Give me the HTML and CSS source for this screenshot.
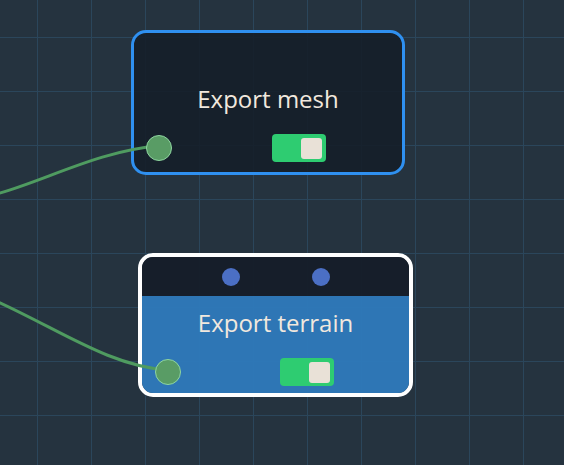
FILE: index.html
```html
<!DOCTYPE html>
<html lang="en">
<head>
  <meta charset="UTF-8">
  <meta name="viewport" content="width=device-width, initial-scale=1.0">
  <title>Flow Editor</title>
  <link rel="stylesheet" href="styles.css">
</head>
<body>
  <div class="canvas">
    <svg class="edges" width="564" height="465" viewBox="0 0 564 465">
      <path d="M -4 194 C 40 183, 100 150, 159 146" />
      <path d="M -4 301 C 60 330, 110 366, 167 370" />
    </svg>

    <div class="node node-mesh">
      <div class="node-title">Export mesh</div>
      <div class="node-row">
        <span class="port"></span>
        <span class="toggle"><span class="knob"></span></span>
      </div>
    </div>

    <div class="node node-terrain">
      <div class="node-head">
        <span class="dot"></span>
        <span class="dot"></span>
      </div>
      <div class="node-body">
        <div class="node-title">Export terrain</div>
        <div class="node-row">
          <span class="port"></span>
          <span class="toggle"><span class="knob"></span></span>
        </div>
      </div>
    </div>
  </div>
</body>
</html>
```

FILE: styles.css
```css
body {
  margin: 0;
  padding: 0;
  font-family: 'Open Sans', 'Liberation Sans', Arial, sans-serif;
  background: #25333f;
  overflow: hidden;
}
.canvas {
  position: relative;
  width: 564px;
  height: 465px;
  overflow: hidden;
  background-color: #25333f;
  background-image:
    linear-gradient(to right, #2b465b 1px, transparent 1px),
    linear-gradient(to bottom, #2b465b 1px, transparent 1px);
  background-size: 54px 54px;
  background-position: 37px 37px;
}
/* edges sit above node backgrounds, ports sit above edges */
.edges {
  position: absolute;
  left: 0;
  top: 0;
  z-index: 1;
}
.edges path {
  fill: none;
  stroke: #4f9b60;
  stroke-width: 3;
}
.node {
  position: absolute;
  box-sizing: border-box;
  border-radius: 15px;
  color: #f1e8de;
  display: flex;
  flex-direction: column;
  overflow: hidden;
}
.node-mesh {
  left: 131px;
  top: 30px;
  width: 274px;
  height: 145px;
  border: 3px solid #2f90f0;
  background: rgba(21, 30, 41, 0.9);
  justify-content: flex-end;
  padding-bottom: 10px;
}
.node-terrain {
  left: 138px;
  top: 253px;
  width: 275px;
  height: 144px;
  border: 4px solid #ffffff;
}
.node-title {
  font-size: 24px;
  line-height: 28.8px;
  text-align: center;
  margin-bottom: 20px;
}
.node-row {
  display: flex;
  align-items: center;
  padding-left: 12px;
  gap: 100px;
}
.port {
  position: relative;
  z-index: 2;
  box-sizing: border-box;
  width: 26px;
  height: 26px;
  border-radius: 50%;
  background: #599c65;
  border: 1.5px solid #8fd6a1;
}
.toggle {
  box-sizing: border-box;
  width: 54px;
  height: 28px;
  border-radius: 4px;
  background: #2ecc71;
  display: flex;
  align-items: center;
  justify-content: flex-end;
  padding: 0 4px;
}
.knob {
  width: 21px;
  height: 21px;
  border-radius: 3px;
  background: #e9e1d7;
}
.node-head {
  height: 39px;
  flex-shrink: 0;
  background: rgba(21, 30, 41, 0.95);
  display: flex;
  align-items: center;
  justify-content: center;
  gap: 72px;
}
.dot {
  width: 18px;
  height: 18px;
  border-radius: 50%;
  background: #4b6fc4;
}
.node-body {
  flex: 1;
  background: rgba(46, 122, 188, 0.95);
  display: flex;
  flex-direction: column;
  justify-content: flex-end;
  padding-bottom: 7px;
}
.node-body .node-title {
  margin-bottom: 20px;
}
.node-body .node-row {
  padding-left: 13px;
  gap: 99px;
}
```
